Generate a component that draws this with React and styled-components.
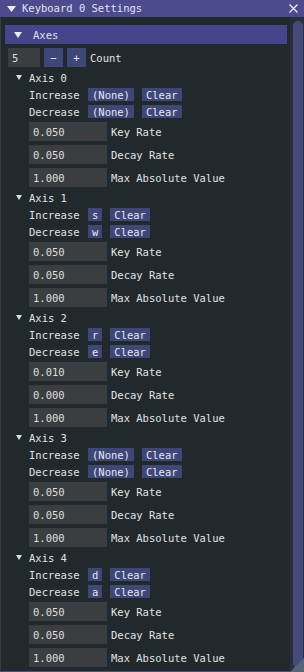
import React from "react";
import styled, { createGlobalStyle } from "styled-components";

const Global = createGlobalStyle`
  html, body { margin: 0; padding: 0; background: #1a1f22; }
  body { font-family: "DejaVu Sans Mono", "Liberation Mono", monospace; }
`;

const FONT = `"DejaVu Sans Mono", "Liberation Mono", monospace`;

const Window = styled.div`
  position: relative;
  width: 304px;
  height: 672px;
  display: flex;
  flex-direction: column;
  background: #22292c;
  box-shadow: inset 0 0 0 1px #343c44;
  overflow: hidden;
  font-family: ${FONT};
  font-size: 10.5px;
  color: #e2e2e2;
`;

const TitleBar = styled.div`
  height: 17px;
  flex: none;
  display: flex;
  align-items: center;
  background: #4b4b8e;
  padding: 0 6px 0 7px;
  color: #e4e4f2;
`;

const TitleText = styled.span`
  flex: 1;
  margin-left: 6px;
  line-height: 17px;
`;

const Body = styled.div`
  flex: 1;
  display: flex;
  min-height: 0;
  border-bottom: 1px solid #4b4b8e;
`;

const Content = styled.div`
  flex: 1;
  display: flex;
  flex-direction: column;
  gap: 4px;
  padding: 8px 6px 0 8px;
  overflow: hidden;
`;

const Header = styled.div`
  height: 19px;
  margin: 0 -3px;
  display: flex;
  align-items: center;
  background: #45458b;
  padding-left: 9px;
  flex: none;
`;

const HeaderLabel = styled.span`
  margin-left: 11px;
`;

const Row = styled.div`
  height: ${(p) => p.$h || 13}px;
  display: flex;
  align-items: center;
  gap: ${(p) => p.$gap ?? 4}px;
  padding-left: ${(p) => p.$indent || 0}px;
  flex: none;
`;

const Section = styled.div`
  display: flex;
  flex-direction: column;
  gap: 4px;
`;

const Arrow = styled.svg`
  flex: none;
  margin-right: ${(p) => p.$mr || 0}px;
`;

const Frame = styled.div`
  width: ${(p) => p.$w}px;
  height: 19px;
  background: #3b3e40;
  display: flex;
  align-items: center;
  padding-left: 4px;
  box-sizing: border-box;
  flex: none;
  color: #dedede;
`;

const SmallButton = styled.div`
  height: ${(p) => p.$h || 13}px;
  min-width: ${(p) => p.$w || 0}px;
  padding: 0 ${(p) => (p.$w ? 0 : 4)}px;
  box-sizing: border-box;
  display: flex;
  align-items: center;
  justify-content: center;
  background: #3e4878;
  color: #e6e6ee;
  flex: none;
`;

const KeyLabel = styled.span`
  width: 51px;
  flex: none;
  margin-right: 8px;
`;

const ButtonGap = styled.div`
  display: flex;
  gap: 8px;
`;

const Scrollbar = styled.div`
  width: 14px;
  flex: none;
  background: #27303a;
  display: flex;
  padding: 4px 1px 3px 3px;
  box-sizing: border-box;
`;

const Thumb = styled.div`
  flex: 1;
  border-radius: 5px;
  background: #444a7a;
`;

const Grip = styled.svg`
  position: absolute;
  right: 0;
  bottom: 0;
`;

const TriDown = ({ w = 8, h = 6, mr = 0, color = "#ececf4" }) => (
  <Arrow width={w} height={h} viewBox={`0 0 ${w} ${h}`} $mr={mr}>
    <polygon points={`0,0 ${w},0 ${w / 2},${h}`} fill={color} />
  </Arrow>
);

const axes = [
  { inc: "(None)", dec: "(None)", key: "0.050", decay: "0.050", max: "1.000" },
  { inc: "s", dec: "w", key: "0.050", decay: "0.050", max: "1.000" },
  { inc: "r", dec: "e", key: "0.010", decay: "0.000", max: "1.000" },
  { inc: "(None)", dec: "(None)", key: "0.050", decay: "0.050", max: "1.000" },
  { inc: "d", dec: "a", key: "0.050", decay: "0.050", max: "1.000" },
];

const KeyRow = ({ label, value }) => (
  <Row $indent={21} $gap={0}>
    <KeyLabel>{label}</KeyLabel>
    <ButtonGap>
      <SmallButton>{value}</SmallButton>
      <SmallButton>Clear</SmallButton>
    </ButtonGap>
  </Row>
);

const FieldRow = ({ value, label }) => (
  <Row $indent={21} $h={19}>
    <Frame $w={78}>{value}</Frame>
    <span>{label}</span>
  </Row>
);

const Axis = ({ index, a }) => (
  <Section>
    <Row $indent={8} $gap={0}>
      <TriDown w={6} h={5} mr={7} color="#dcdcdc" />
      <span>Axis {index}</span>
    </Row>
    <KeyRow label="Increase" value={a.inc} />
    <KeyRow label="Decrease" value={a.dec} />
    <FieldRow value={a.key} label="Key Rate" />
    <FieldRow value={a.decay} label="Decay Rate" />
    <FieldRow value={a.max} label="Max Absolute Value" />
  </Section>
);

export default function App() {
  return (
    <>
      <Global />
      <Window>
        <TitleBar>
          <TriDown w={9} h={6} />
          <TitleText>Keyboard 0 Settings</TitleText>
          <svg width="9" height="9" viewBox="0 0 9 9">
            <path d="M0.5 0.5 L8.5 8.5 M8.5 0.5 L0.5 8.5" stroke="#f0f0f8" strokeWidth="1.2" />
          </svg>
        </TitleBar>
        <Body>
          <Content>
            <Header>
              <TriDown w={8} h={6} />
              <HeaderLabel>Axes</HeaderLabel>
            </Header>
            <Row $h={19}>
              <Frame $w={32}>5</Frame>
              <SmallButton $h={19} $w={19}>−</SmallButton>
              <SmallButton $h={19} $w={19}>+</SmallButton>
              <span>Count</span>
            </Row>
            {axes.map((a, i) => (
              <Axis key={i} index={i} a={a} />
            ))}
          </Content>
          <Scrollbar>
            <Thumb />
          </Scrollbar>
        </Body>
        <Grip width="14" height="14" viewBox="0 0 14 14">
          <polygon points="14,0 14,14 0,14" fill="#5a6478" />
        </Grip>
      </Window>
    </>
  );
}
